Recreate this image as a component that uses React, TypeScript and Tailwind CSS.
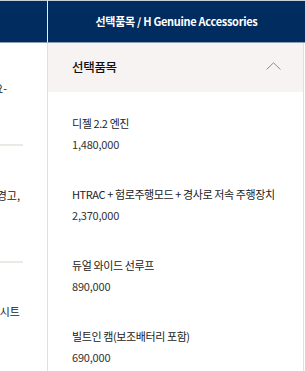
import React from "react";

const font = { fontFamily: '"Noto Sans CJK KR", "Noto Sans", sans-serif' };

const items = [
  { name: "디젤 2.2 엔진", price: "1,480,000" },
  { name: "HTRAC + 험로주행모드 + 경사로 저속 주행장치", price: "2,370,000" },
  { name: "듀얼 와이드 선루프", price: "890,000" },
  { name: "빌트인 캠(보조배터리 포함)", price: "690,000" },
];

export default function App() {
  return (
    <div
      className="w-[305px] h-[371px] overflow-hidden flex bg-white text-[#222]"
      style={font}
    >
      {/* left column (clipped table) */}
      <div className="w-[47px] shrink-0 flex flex-col overflow-hidden">
        <div className="h-[43px] shrink-0 bg-[#002c5f] border-t border-[#c5cfdb] border-b border-b-[#8d9db3]" />
        <div className="flex flex-col">
          <div className="mt-[37px] w-[7px] flex justify-end whitespace-nowrap text-[11px] leading-[16px]">
            <span>필요-</span>
          </div>
          <div className="mt-[48px] h-[2px] w-[23px] bg-[#ece8e3]" />
          <div className="mt-[41px] w-[20px] flex justify-end whitespace-nowrap text-[11px] leading-[16px]">
            <span>차로 이탈 경고,</span>
          </div>
          <div className="mt-[58px] h-[2px] w-[23px] bg-[#ece8e3]" />
          <div className="mt-[40px] w-[20px] flex justify-end whitespace-nowrap text-[11px] leading-[16px]">
            <span>시트</span>
          </div>
        </div>
      </div>

      {/* right column */}
      <div className="w-[258px] shrink-0 flex flex-col">
        <div className="h-[43px] shrink-0 bg-[#002c5f] border-t border-[#c5cfdb] border-b border-b-[#8d9db3] border-l border-l-[#e8ecf1] flex items-center justify-center">
          <span className="text-white text-[11px] font-bold tracking-[-0.3px]">
            선택품목 / H Genuine Accessories
          </span>
        </div>
        <div className="flex-1 mr-[1px] border-l border-r border-[#e3ded7] flex flex-col">
          <div className="h-[49px] shrink-0 bg-[#f6f3f2] flex items-center justify-between pl-[24px] pr-[22px]">
            <span className="text-[12.5px] font-medium text-[#111] tracking-[-0.3px]">선택품목</span>
            <svg width="15" height="8" viewBox="0 0 15 8" className="mb-[4px]">
              <path d="M0.5 7.5 L7.5 0.8 L14.5 7.5" fill="none" stroke="#8c8c8c" strokeWidth="1" />
            </svg>
          </div>
          <div className="flex flex-col pl-[24px] pt-[23px]">
            {items.map((it) => (
              <div key={it.name} className="flex flex-col mb-[34px]">
                <span className="text-[11px] leading-[16px] tracking-[-0.4px] text-[#222] whitespace-nowrap">
                  {it.name}
                </span>
                <span className="mt-[5px] text-[11px] leading-[16px] tracking-[-0.2px] text-[#333]">
                  {it.price}
                </span>
              </div>
            ))}
          </div>
        </div>
      </div>
    </div>
  );
}
